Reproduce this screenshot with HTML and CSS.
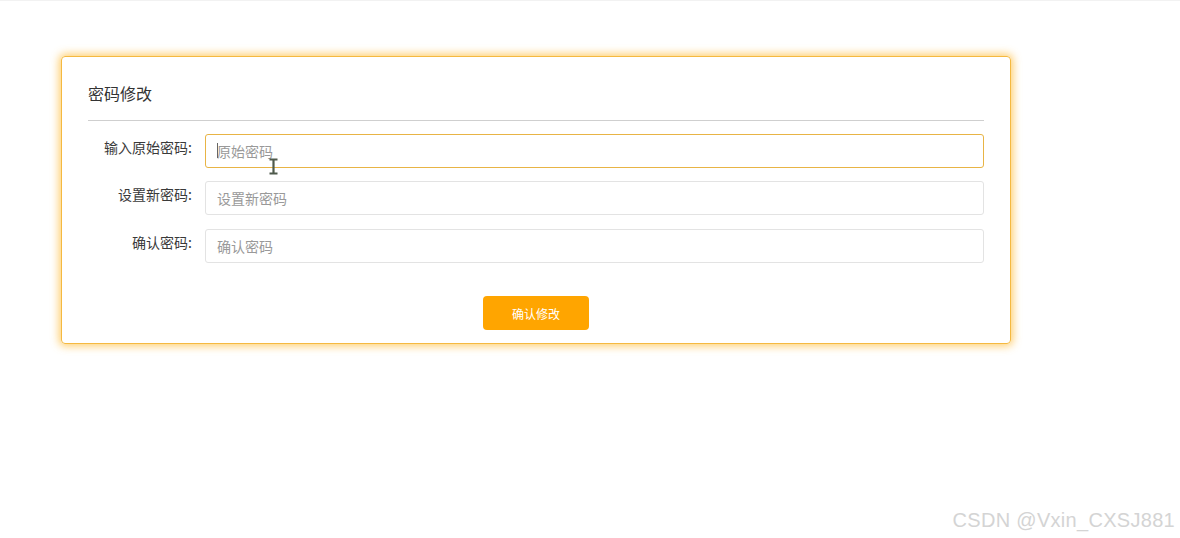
FILE: index.html
```html
<!DOCTYPE html>
<html lang="zh-CN">
<head>
<meta charset="utf-8">
<title>密码修改</title>
<link rel="stylesheet" href="styles.css">
</head>
<body>
<div class="page">
  <section class="card">
    <header class="card-head">密码修改</header>
    <form class="form">
      <div class="row">
        <label class="label">输入原始密码:</label>
        <div class="field">
          <input class="input is-active" type="password" placeholder="原始密码">
          <span class="caret"></span>
        </div>
      </div>
      <div class="row">
        <label class="label">设置新密码:</label>
        <div class="field"><input class="input" type="password" placeholder="设置新密码"></div>
      </div>
      <div class="row row-last">
        <label class="label">确认密码:</label>
        <div class="field"><input class="input" type="password" placeholder="确认密码"></div>
      </div>
      <div class="actions">
        <button type="button" class="btn">确认修改</button>
      </div>
    </form>
  </section>
  <svg class="ibeam" width="11" height="17" viewBox="0 0 11 17"><path d="M1.5 1.5h8M5.5 1.5v14M1.5 15.5h8" stroke="#4f5a4c" stroke-width="2.2" fill="none"/></svg>
  <div class="watermark">CSDN @Vxin_CXSJ881</div>
</div>
</body>
</html>
```
FILE: styles.css
```css
* { box-sizing: border-box; }
html, body { margin: 0; padding: 0; background: #fff; }
body {
  font-family: "Noto Sans CJK SC", "Liberation Sans", sans-serif;
  color: #333;
  border-top: 1px solid #f2f2f2;
}
.page {
  position: relative;
  width: 1180px;
  height: 537px;
  padding: 55px 0 0 61px;
}
.card {
  width: 950px;
  height: 288px;
  border: 1px solid #f5b940;
  border-radius: 4px;
  box-shadow: 0 0 8px 2px rgba(255, 192, 70, 0.8);
  padding: 0 26px 13px 26px;
  display: flex;
  flex-direction: column;
}
.card-head {
  height: 64px;
  padding-top: 23px;
  font-size: 16px;
  line-height: 26px;
  color: #333;
  border-bottom: 1px solid #cfcfcf;
}
.form {
  display: flex;
  flex-direction: column;
  gap: 13px;
  padding-top: 13px;
  flex: 1;
}
.row {
  display: flex;
  align-items: flex-start;
  gap: 13px;
}
.row-last { margin-top: 1px; }
.label {
  width: 104px;
  text-align: right;
  font-size: 14px;
  line-height: 27px;
  color: #3a3a3a;
}
.field {
  position: relative;
  flex: 1;
}
.input {
  width: 100%;
  height: 34px;
  border: 1px solid #e3e3e3;
  border-radius: 3px;
  padding: 0 11px;
  font-family: inherit;
  font-size: 14px;
  color: #333;
  outline: none;
  background: #fff;
}
.input::placeholder { color: #999; }
.input.is-active { border-color: #e8b445; }
.caret {
  position: absolute;
  left: 12px;
  top: 9px;
  width: 1px;
  height: 15px;
  background: #666;
}
.actions {
  display: flex;
  justify-content: center;
  margin-top: 20px;
}
.btn {
  width: 106px;
  height: 34px;
  border: none;
  border-radius: 4px;
  background: #ffa500;
  color: #fff;
  font-family: inherit;
  font-size: 12px;
  cursor: pointer;
}
.ibeam {
  position: absolute;
  left: 268px;
  top: 157px;
}
.watermark {
  position: absolute;
  right: 5px;
  bottom: 6px;
  font-family: "Liberation Sans", sans-serif;
  font-size: 20px;
  color: #d4d4d4;
  text-shadow: 0 1px 1px #fff;
  letter-spacing: 0.3px;
}
```
